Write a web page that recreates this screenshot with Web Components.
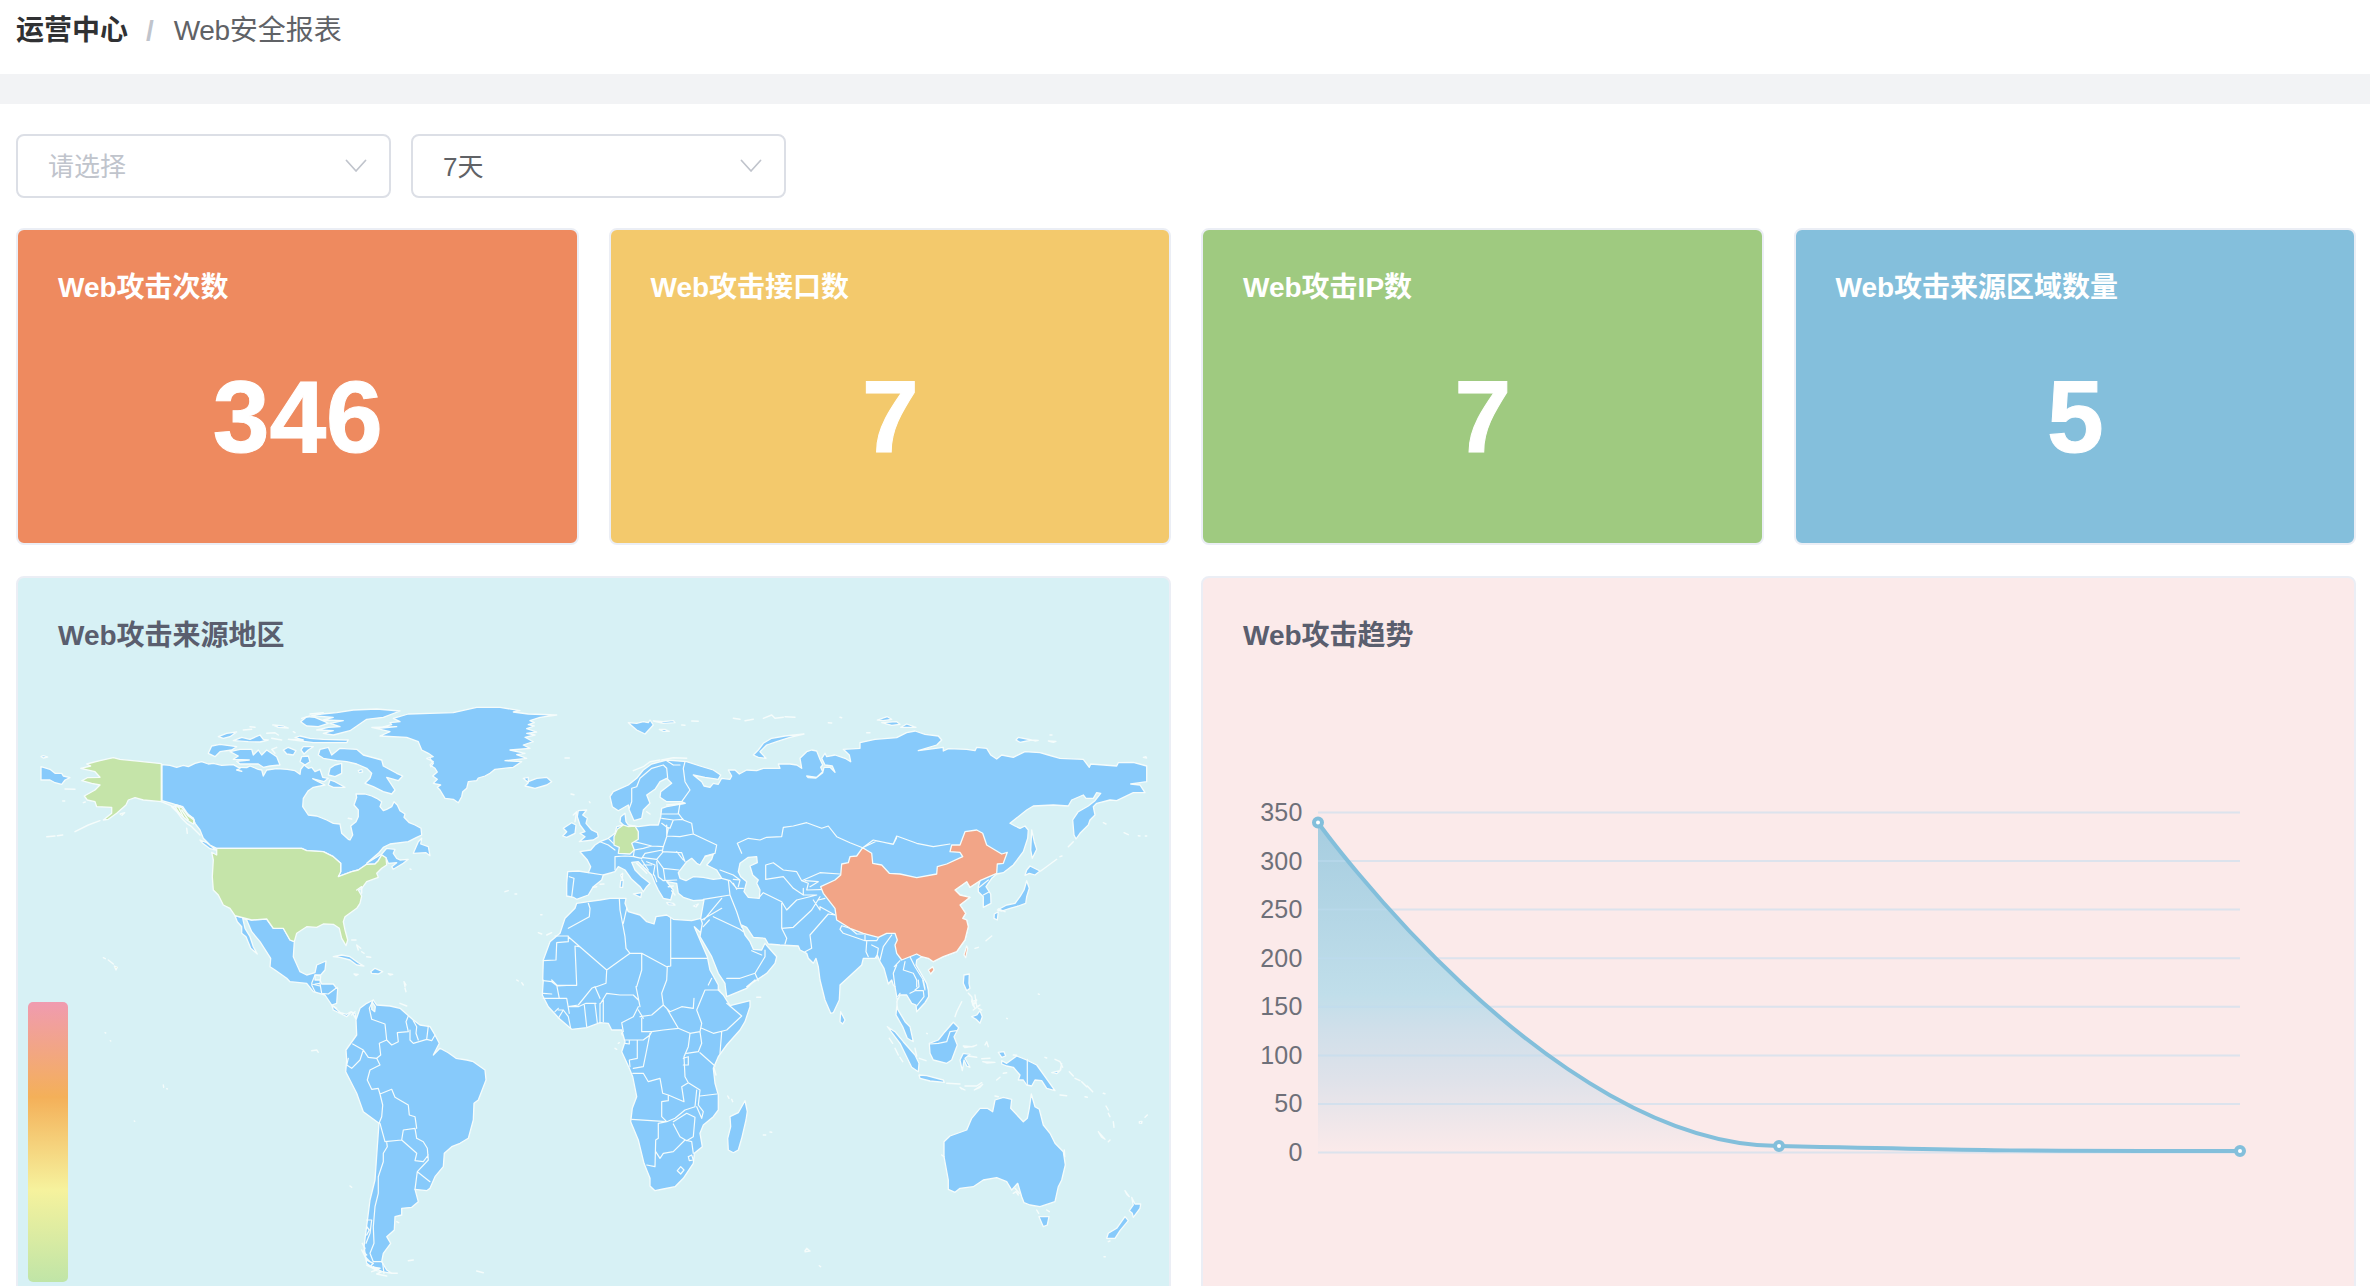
<!DOCTYPE html>
<html lang="zh-CN">
<head>
<meta charset="utf-8">
<title>Web安全报表</title>
<style>
html,body{margin:0;height:1286px;overflow:hidden;background:#fff}
body{font-family:"Liberation Sans","Noto Sans CJK SC",sans-serif;color:#303133}
</style>
</head>
<body>
<report-page></report-page>
<script>
const define=(name,html,after)=>customElements.define(name,class extends HTMLElement{
  constructor(){super();this.attachShadow({mode:'open'});}
  connectedCallback(){this.shadowRoot.innerHTML=html;if(after)after(this,this.shadowRoot);}
});

define('bread-crumb',`<style>
:host{display:flex;align-items:center;height:62px;padding:0 16px 12px;font-size:28px;line-height:40px;color:#606266}
b{color:#303133;font-weight:700}i{font-style:normal;color:#c0c4cc;margin:0 20px 0 18px;font-weight:700}
.w{letter-spacing:-.4px}
</style><b>运营中心</b><i>/</i><span><span class="w">Web</span>安全报表</span>`);

define('select-box',`<style>
:host{display:flex;box-sizing:border-box;width:375px;height:64px;border:2px solid #dcdfe6;border-radius:8px;align-items:center;justify-content:space-between;padding:0 21px 3px 30px;font-size:26px;color:#606266}
:host([empty]){color:#c0c4cc}svg{display:block}
</style><slot></slot><svg width="24" height="14" viewBox="0 0 24 14" fill="none" stroke="#c0c4cc" stroke-width="1.7" stroke-linecap="round" stroke-linejoin="round"><path d="M2.500 2.500 12 13 21.500 2.500"/></svg>`);

define('stat-card',`<style>
:host{display:block;box-sizing:border-box;flex:1;height:317px;border:2px solid #ebeef5;border-radius:8px;background:var(--tone);color:#fff;padding:38px 39px 0 40px;font-weight:700}
h3{margin:0;font-size:28px;line-height:40px;height:40px;font-weight:700}
p{margin:54px 0 0;text-align:center;font-size:102px;line-height:110px;-webkit-text-stroke:1px #fff}
</style><h3>Web<slot></slot></h3><p></p>`,(el,r)=>{r.querySelector('p').textContent=el.getAttribute('value')});

define('chart-panel',`<style>
:host{display:flex;flex-direction:column;box-sizing:border-box;width:1155px;height:760px;border:2px solid #ebeef5;border-radius:8px;background:var(--tone);overflow:hidden}
h3{box-sizing:border-box;flex:none;margin:0;padding:37px 39px 0 40px;height:68px;font-size:28px;line-height:42px;color:#5a5e6e;font-weight:700}
</style><h3>Web<slot name="title"></slot></h3><slot></slot>`);

/* Map sheets: every letter selects a sheet origin; coordinates are thirds of a pixel. */
const SHEETS={A:[0,690],B:[200,690],C:[500,690],D:[800,690],F:[200,980],G:[500,980],H:[800,980],K:[0,960]};
function trace(s,open){
  let o=SHEETS.A,out='',first=true;
  for(const t of s.trim().split(/\s+/)){
    if(SHEETS[t]){o=SHEETS[t];if(open)first=true;continue}
    if(t==='|'){first=true;continue}
    if(t==='z'){out+='Z';first=true;continue}
    const [x,y]=t.split(',').map(Number);
    out+=(first?'M':'L')+(o[0]+x/3).toFixed(1)+' '+(o[1]+y/3).toFixed(1);first=false;
  }
  return out;
}
const LAND=`
A 123,230 150,238 165,250 185,250 190,258 210,263 195,270 185,283 165,278 150,270 123,270 z
A 123,200 130,197 143,201 130,204 z
A 486,224 510,226 530,232 550,226 565,230 585,220 605,215 625,222 640,220 665,226 700,224 715,232 740,233 750,228 775,238 785,240
B 190,258 200,240 230,236 262,238 285,242 300,253 302,238 312,225 325,235 335,232 345,245 360,238 368,262 385,265 372,275 345,268 338,266 355,275 375,285 340,292 325,302 310,325 308,350 325,375 350,378 380,390 400,400 420,402 425,430 445,448 450,450 458,435 452,408 468,395 475,380 475,360 462,345 470,322 468,312 495,312 515,318 530,325 545,335 540,350 550,362 560,358 575,350 582,335 592,345 600,362 615,372 612,382 628,398 645,405 663,415 665,435 650,442 625,455 570,462 550,472 535,490 500,520 545,492 560,475 585,478 580,490 590,505 600,510 625,508 610,520 580,538 575,530 590,518 565,520 558,503 545,495 535,512 525,522 500,523 475,540 455,545 415,560 422,545 422,520 400,500 370,485 320,482 305,475 50,475 30,465 10,445 0,420 -15,400 -20,385 -45,365 -60,348 -85,340 -114,332 z
B 0,450 20,458 48,480 30,476 8,460 z
B 640,490 655,455 665,445 662,462 685,470 690,497 678,488 z
B 105,677 155,690 200,687 220,715 250,715 270,750 283,755 280,800 300,845 320,855 345,848 350,825 378,813 375,840 362,855 345,855 345,870 360,870 365,882 400,882 410,895
F 413,25 410,70 395,75 420,97 440,103 452,95 465,100 468,118 455,95 440,110 400,90 395,75 375,45 340,35 320,10 270,5
B 260,865 225,840 210,830 212,805 180,755 155,725 140,690 128,685 135,715 150,740 160,770 172,792 152,775 138,740 125,730 125,710 112,695 z
B 400,800 425,795 450,800 475,818 492,828 470,825 450,810 420,802 z
B 512,845 525,835 548,845 535,852 515,850 z B 462,852 475,853 468,857 z B 565,851 578,853 570,855 z
B 25,190 35,168 60,163 110,170 95,180 60,185 45,200 z
B 90,185 120,178 155,178 160,195 175,180 185,195 200,180 230,200 240,225 210,228 190,232 175,222 120,222 110,214 148,210 100,208 115,198 z
B 55,140 80,130 110,126 90,140 70,145 z B 100,152 125,142 150,148 180,135 190,148 205,150 180,156 145,155 z
B 218,105 250,108 265,114 235,112 z B 250,180 265,172 288,182 280,195 260,192 z B 303,180 310,170 340,170 325,180 312,192 z
B 300,215 305,200 325,198 330,215 315,225 z B 265,148 310,150 285,143 300,138 330,145 370,148 445,150 440,158 340,158 z
B 302,95 320,80 345,82 375,95 385,100 355,110 320,108 z
B 365,72 410,68 460,60 530,57 600,63 550,82 500,88 475,105 450,122 400,135 370,130 400,122 350,120 385,112 420,110 390,100 430,92 370,90 400,82 335,77 z
B 355,195 360,178 385,172 395,195 420,175 470,178 490,195 545,210 550,228 590,250 608,258 595,272 560,262 575,285 585,300 575,312 550,305 520,290 495,280 510,265 515,250 500,235 470,222 440,215 410,212 370,205 z
B 390,235 405,225 425,220 425,250 405,260 385,255 z B 390,270 405,275 435,292 400,292 385,285 z B 475,242 485,238 488,246 478,248 z
B 515,112 590,110 530,116 575,104 570,98 600,95 580,85 625,72 690,70 760,68 830,52 900,52 960,62 940,66 985,72 1070,75 1020,82 990,92 1003,98 985,104 1003,108 980,116 1010,126 980,130 1005,135 975,142 1000,155 970,165 990,175 930,180 975,190 950,194 980,205 915,212 965,215 940,232 885,238 870,250 855,258 835,264 830,272 805,275 800,295 788,305 785,320 775,338 760,328 735,325 720,300 712,292 722,285 700,280 712,268 698,258 712,246 705,235 690,225 700,215 680,205 700,200 685,190 665,180 655,155 620,142 540,138 570,125 z
B 970,265 985,262 985,275 1010,265 1040,262 1055,275 1040,285 1005,295 975,288 985,278 z
C 235,362 260,360 248,375 262,385 258,400 275,420 292,428 295,440 280,450 238,455 255,440 240,430 255,425 240,405 232,380 z
C 190,415 215,398 228,405 225,430 200,442 188,438 200,425 z
C 385,98 410,100 430,95 445,98 450,90 460,105 435,132 410,120 z C 460,93 490,95 520,92 525,98 490,100 z C 478,118 495,118 508,124 490,124 z
C 400,612 425,608 422,622 z C 362,572 370,570 368,592 360,592 z C 362,555 368,550 367,567 z C 500,638 520,640 525,645 505,644 z C 580,648 595,642 588,651 z
C 760,195 775,180 790,160 815,145 855,138 912,132 870,142 830,155 800,165 780,185 798,205 775,202 z
D 232,90 262,80 275,88 250,92 z D 245,98 290,95 300,103 275,106 z D 302,112 320,102 348,112 z D 648,150 655,142 695,150 660,157 z D 695,150 715,151 705,153 z D 745,153 768,154 760,157 z D 1030,202 1038,200 1040,204 z
C 560,215 600,228 640,240 662,255 655,268 615,262 580,255 605,275 612,288 630,292 640,280 655,283 665,265 690,268 695,258 685,240 705,240 718,252 740,240 770,242 790,235 840,235 835,222 870,222 890,225 905,235 900,205 920,185 935,180 950,183 960,208 968,225 962,232 968,245 950,262 920,258 925,263 948,264 968,248 972,232 990,232 1005,247 997,228 975,225 965,205 975,190 980,200 1005,195 1035,205 1052,215 1048,195 1030,178 1080,175 1080,158 1125,148 1190,143
D 290,143 320,128 345,123 375,133 415,138 425,150 410,165 355,182 430,172 430,183 445,176 500,178 525,182 530,172 560,175 572,195 590,207 605,195 640,202 675,185 720,188 745,195 780,205 850,208 868,232 872,222 950,228 955,218 1000,217 1040,228 1040,275 1020,278 992,282 1020,285 1035,308 1000,308 950,332 930,330 890,340 880,350 885,375 870,390 865,405 840,430 828,447 822,435 818,390 835,365 865,348 885,332 902,310 890,308 880,325 858,325 850,315 815,330 805,348 760,345 700,348 680,360 630,400 645,408 660,415 675,408 685,420 683,445 670,485 640,525 610,548 590,552 575,565 558,590 572,612 573,640 550,652 550,620 535,605 535,590 540,572 510,592 500,575 465,600 480,615 510,622 480,645 497,670 488,685 500,690 505,710 495,750 470,785 430,800 400,815 385,805 365,800 350,810 348,825 360,845 380,880
H 385,30 386,50 375,68 350,95 348,75 335,70 320,45 300,45 290,65 293,88 315,125 330,140 340,185 322,175 308,140 288,105 292,60 285,20
D 280,885 275,870 265,882 252,835 240,815 232,795 225,805 205,805 190,805 185,825 120,885
H 120,20 118,60 100,98 92,100 75,60 60,0
D 55,830 48,805 40,820 25,805 20,790 0,780
C 895,768 840,765 805,762 795,745 760,742 740,712 725,705 735,735 750,755 760,778 785,780 795,760 805,772 830,800 825,820 800,850 770,870 740,890
G 765,0 740,25 680,50 676,20
C 675,880 655,850 635,800 600,740 607,700 602,685 612,630 580,632 550,622 535,610 530,580 500,575 520,600 512,630 490,625 475,600 465,580 455,555 430,530 415,515 395,517 405,540 425,560 450,580 440,590 430,605 420,590 395,568 375,540 355,530 345,545 310,555 305,570 280,590 265,615 230,628 220,622 200,618 200,580 203,545 235,543 265,548 272,530 262,510 240,485 272,480 285,465 300,455 325,445 345,430 350,410 370,405 360,395 362,380 375,370 378,395 385,405 415,410 450,405 475,405 482,380 485,355 500,350 555,340 545,335 500,335 480,322 482,305 515,280 500,265 480,275 465,298 440,315 450,340 430,360 425,385 402,392 388,360 385,345 355,362 337,350 330,320 340,305 385,285 410,265 430,240 455,222 500,210 z
C 230,640 265,635 300,630 330,625 378,625 375,640 385,665 420,675 440,695 462,702 468,680 500,675 520,688 575,692 602,685 607,700 602,728 583,710 600,750 622,800 630,840 655,885
G 655,30 670,45 690,77 750,62 750,80 735,125 720,150 680,195 655,230 640,265 645,310 655,345 655,390 640,410 610,435 600,460 607,500 583,520 580,550 550,595 525,620 490,627 465,632 450,618 450,595 432,550 415,480 392,425 397,385 410,350 398,290 388,265 365,215 375,185 365,150 335,150 325,130 300,128 260,143 215,148 180,118 145,80 127,45 130,0
C 128,870 130,810 150,755 180,730 195,685 225,655 z
G 690,410 715,398 735,362 742,395 738,420 725,475 715,510 700,518 685,510 683,475 692,440 z
C 1022,965 1035,990 1028,1002 1020,995 z H 262,140 285,155 310,185 345,225 357,250 355,275 335,262 300,190 z
H 357,285 380,287 430,300 433,307 390,303 360,295 z
H 388,190 415,180 435,155 460,127 476,143 462,170 472,195 455,240 440,250 400,240 390,220 z
H 480,240 490,220 510,223 495,235 510,262 500,258 492,240 487,272 z H 490,198 515,200 530,195 520,200 495,203 z
H 595,217 612,215 617,228 605,232 z H 605,242 620,250 650,228 680,240 710,255 735,290 765,332 740,325 725,302 705,300 695,318 680,315 670,300 655,300 660,285 640,262 620,258 605,252 z
H 755,278 780,272 785,250 782,270 770,281 z H 480,322 495,330 485,327 z H 523,330 548,313 540,322 z H 548,245 585,247 560,249 z
H 530,105 540,92 547,110 540,130 528,118 515,110 z D 492,855 508,852 507,880 510,895 500,902 490,880 z H 515,60 525,85 518,75 z
H 694,342 705,380 718,388 730,435 750,460 765,490 790,515 796,555 785,600 775,620 765,665 720,680 690,675 672,668 665,650 653,610 635,630 620,605 590,593 550,600 520,620 480,625 465,637 445,628 445,600 432,530 432,485 450,468 500,450 515,415 540,385 562,385 578,395 585,360 610,352 635,358 632,385 670,425 682,415 688,385 z
H 717,710 747,710 742,735 730,740 z
H 995,652 1005,672 1022,672 1020,685 1000,712 997,700 988,692 1000,675 z H 975,710 985,722 960,752 945,775 920,775 925,760 950,745 z
H 895,455 915,478 905,472 z H 1018,425 1026,424 1025,430 1018,429 z H 975,632 988,650 980,643 z
D 695,420 703,455 710,478 697,505 692,480 z D 690,528 720,543 705,555 688,550 675,556 680,540 z
D 680,572 688,595 680,620 677,640 655,648 630,655 605,663 592,660 620,645 645,640 660,620 672,600 z D 583,672 595,665 592,690 582,685 z
F 700,225 720,205 745,218 768,235 800,240 820,245 855,270 858,300 835,360 822,370 820,420 805,475 780,490 755,500 733,520 730,560 705,590 690,625 680,632 645,628 655,665 635,682 605,685 605,705 585,710 583,750 560,770 572,790 550,820 545,845 560,870 575,880 530,872 500,850 492,800 505,700 510,660 525,600 532,500 537,430 490,395 470,340 437,275 440,240 438,210 470,165 468,120 480,85 500,70 520,60 530,75 570,78 600,85 640,120 660,135 690,140 705,165 718,190 z`;
const USA=`A 242,235 272,228 260,222 300,212 340,203 360,208 420,214 484,221 484,335 430,330 405,323 385,330 378,345 350,370 325,388 310,390 335,370 335,352 290,350 285,335 262,330 253,318 285,300 300,285 275,280 245,272 262,263 300,262 285,245 z
B 50,475 305,475 320,482 370,485 400,500 422,520 422,545 415,560 455,545 475,540 500,523 525,522 535,512 545,495 558,503 560,525 545,535 530,550 535,562 500,575 485,595 475,600 485,618 480,640 470,655 435,680 430,695 435,720 443,750 438,767 425,745 418,715 400,703 370,702 350,712 320,710 290,730 283,755 270,750 250,715 220,715 200,687 155,690 105,677 90,655 70,645 55,615 40,600 37,560 40,510 35,487 50,495 z
A 343,828 352,832 348,840 z A 360,372 374,368 366,376 z A 525,350 545,352 565,378 582,390 580,402 560,390 540,372 z`;
const CHINA=`D 188,473 215,490 218,520 245,525 268,550 300,552 350,563 410,552 412,530 440,522 488,500 480,487 450,485 455,465 480,465 495,425 530,420 548,430 560,465 585,480 605,492 622,487 610,520 592,522 590,550 540,572 510,592 500,575 465,600 480,615 510,622 480,645 497,670 488,685 500,690 505,710 495,750 470,785 430,800 400,815 385,805 365,800 350,792 305,810 290,790 285,765 292,750 285,730 260,730 235,742 190,730 150,715 110,690 105,655 70,610 62,590 105,570 122,555 125,522 145,518 150,500 170,498 z
D 385,840 398,830 402,840 392,852 z D 492,795 500,768 503,775 497,803 z`;
const GERMANY=`C 352,418 370,405 385,410 405,408 415,425 415,448 395,460 403,480 390,492 355,490 358,472 342,465 342,440 z`;
const WATER=`C 540,565 535,548 560,515 575,505 590,520 600,525 615,500 640,493 635,508 620,525 650,540 665,565 640,568 610,562 580,560 558,572 z
C 720,520 745,502 770,500 772,518 750,528 758,555 775,570 770,580 780,600 778,625 745,622 732,605 740,575 722,560 715,545 z F 516,65 526,80 524,95 515,88 z`;
const BORDERS=`B 345,855 335,880 | 345,855 362,858 360,880 345,882 | F 335,15 345,35 | 360,10 365,40 385,42 412,22 | 335,12 360,18
F 395,75 410,85 | 465,95 455,105
F 520,60 508,85 515,118 555,132 560,180 575,195 595,185 592,158 625,155 618,125 625,108 | 630,150 630,180 640,190 680,178 695,182 705,165 | 640,122 650,140 648,160 655,180 | 685,138 680,178
F 560,180 538,190 542,225 530,235 505,232 490,210 458,192 | 490,210 480,240 455,265 440,255 445,235 | 530,235 540,255 510,270 502,300 515,328 535,325 540,342 575,328 585,352 625,375 628,405 645,410 650,445 | 650,475 670,485 682,505 685,540 652,575 690,605 | 540,342 548,375 545,410 537,430 | 540,430 555,485 605,480 610,450 645,445 650,475 | 605,480 650,520 645,542 670,545 685,525 | 652,575 645,628 | 560,487 562,500 550,520 550,545 535,590 535,640 525,680 520,740 522,790 510,820 520,845 545,845 | 548,850 552,880 | 500,720 515,720 510,760 498,790
C 555,215 550,235 555,275 570,300 545,335 | 540,225 520,225 | 500,235 490,225 455,235 420,265 410,290 395,295 395,335 388,355 | 500,235 503,265 | 520,225 500,212
C 540,340 535,370 550,390 575,400 580,432 540,440 500,438 | 482,372 535,372 | 485,385 520,390 550,388 | 500,438 505,415 485,400 | 520,390 510,415 498,410 | 500,405 500,440 490,470 455,468 403,455 | 580,432 650,465 645,490 615,498 | 490,470 487,485 545,488 555,515 | 530,485 550,510
C 403,480 430,475 455,468 | 435,490 487,480 | 403,480 400,500 425,505 435,490 | 345,500 375,498 405,500 | 345,500 345,540 | 345,480 325,465 300,455 | 325,445 340,460 | 430,503 470,508 490,485 | 470,508 490,535 537,540 | 440,515 465,525 460,555 | 425,510 445,540 | 470,515 475,560 490,572 530,570 | 490,535 495,570 | 463,555 470,575 | 430,525 455,525 | 265,548 310,555 | 208,560 222,565 215,620
C 660,540 700,555 720,570 700,568 | 665,565 690,572 710,595 730,595 | 685,570 690,615 610,628 | 700,580 710,598 | 720,570 715,590
C 725,490 712,460 745,445 780,450 800,442 845,440 850,412 880,408 920,398 965,415 985,408 1010,440 1050,458 1088,473 1120,450 1180,463 1190,443
D 188,473 230,453 280,462 290,438 350,460 400,470 450,462
C 797,568 797,525 820,518 850,540 890,545 905,572 925,580 | 797,568 850,560 880,595 910,615 | 905,572 960,548 1020,552 | 925,580 920,600 980,598 | 915,572 955,575 930,590 | 775,625 790,608 845,635 860,660 890,630 950,615 910,615 | 845,640 845,715 860,745 855,762 | 845,715 880,712 935,660 960,620 | 910,615 910,595 | 940,630 960,660 960,650 1005,675 | 955,630 975,625 | 1005,675 985,672 930,735 935,775 915,785
C 690,615 700,640 710,665 725,712 | 612,690 640,655 665,625 | 665,655 605,690 | 640,680 720,718 730,725 | 610,710 628,690 | 680,865 720,865 765,850 795,800 795,780 | 765,850 775,872 | 755,782 785,795
C 265,640 270,655 268,680 205,715 | 130,812 168,810 170,758 205,755 205,738 165,738 | 205,740 320,840 390,790 425,790 500,830 | 358,625 360,660 375,740 378,775 390,790 | 380,655 370,700 | 512,685 512,828 | 512,805 620,805 | 238,770 225,768 230,885 172,888 155,875 130,872 | 320,840 318,880 285,892 | 425,790 425,840 410,890 | 512,828 502,830 500,870
G 285,20 275,25 235,75 205,80 | 170,15 155,0 | 170,15 230,16 | 130,40 155,42 | 170,15 178,55 | 130,55 160,55 200,55 208,100 | 175,90 190,90 175,115 | 190,90 205,110 212,145 | 165,95 175,85 | 205,80 235,80 258,70 288,70 | 285,20 300,55 | 302,70 320,40 360,45 400,45 415,60 | 253,75 260,140 | 285,72 292,128 | 300,70 300,128 | 310,60 310,125 | 408,20 420,80 | 415,80 400,110 365,128 370,155 | 415,90 430,115 | 420,110 455,105 490,75 485,40 500,0 | 425,115 425,155 455,155 450,165 430,180 375,180 | 490,75 510,95 545,80 580,85 582,55 | 500,85 535,145 490,150 455,155 | 535,145 570,160 600,155 605,130 590,90 615,30 660,30 | 605,145 640,160 680,150 725,108 680,70 | 665,155 660,220 | 600,155 605,190 595,215 560,220 | 600,218 645,258 | 570,160 565,200 552,230 555,290 565,308 600,330 | 550,235 565,230 565,255 550,255 | 450,160 440,210 430,260 400,265 | 375,190 388,192 388,182 | 412,180 412,235 388,240 390,260 | 398,280 430,280 445,305 480,295 488,340 505,345 552,365 545,320 565,308 | 505,345 505,362 485,365 485,410 500,425 | 500,425 395,418 | 600,348 650,342 | 600,330 595,375 610,395 605,415 590,380 | 500,425 525,415 555,390 585,380 590,330 | 520,425 560,400 585,412 580,470 560,482 540,470 520,432 | 475,430 500,425 | 475,430 475,475 467,480 465,560 440,555 | 467,515 480,535 490,520 520,515 555,480 575,485 580,520 | 565,530 575,525 580,540 568,542 565,530 | 532,572 542,560 552,570 542,582 532,572
C 625,885 635,865
D 190,732 170,732 150,715 125,707 120,718 130,730 165,742 195,752 | 195,735 195,752 230,752 240,735 | 200,755 198,785 205,800 | 215,765 235,775 230,805 | 275,735 250,770 240,810 | 283,830 300,812 | 315,815 310,840 340,850 350,870 350,890 | 330,800 345,830 370,870 375,895 | 290,825 280,850 285,890
H 330,40 345,32 370,32 372,50 350,78 | 355,0 357,20 345,30 | 368,0 375,30 | 300,40 293,50 | 390,192 415,190 440,185 450,155 470,152 | 682,238 682,315 D 538,592 565,570 | 550,615 568,605`;
const SPECKS=`A 225,425 265,405 300,392 | 140,440 165,438 | 172,437 188,435 | 195,297 225,298 | 188,333 194,333 | 310,803 316,806 | 325,810 340,822 | 250,338 256,336 | 484,335 520,350 530,345 548,350 565,375 580,385 584,400 | 515,350 530,365 545,385 560,400 575,410 | 520,352 540,372 | 545,360 565,390 | 535,350 550,380 | 560,415 562,430 | 1070,600 1085,590 1085,610 | 575,410 600,435
B 455,750 468,750 | 470,765 482,775 | 485,785 492,790 | 500,800 512,802 | 470,765 475,780 | 915,605 925,602 | 945,612 950,612 | 1022,674 1026,674 | 1015,728 1025,732 | 1040,735 1055,728 | 1095,204 1108,204 | 1113,312 1122,314 | 1168,335 1170,338 | 630,537 633,538 | 612,875 615,890 | 950,870 955,873 | 965,878 970,885 | 690,205 700,220 692,230 | 1120,375 1130,365 1125,395 | 445,385 455,387 | 305,85 330,78 | 280,125 285,128 | 150,110 165,112 | 200,130 225,128 235,135 | 215,145 245,150 | 230,172 215,178 225,190 | 130,120 155,118 | 330,72 370,68 | 120,236 110,240 125,244
C 700,85 720,88 | 735,92 760,88 | 790,85 815,75 825,85 850,82 | 855,80 885,82 | 545,105 555,106 | 575,93 595,94 | 985,98 995,99 | 1100,128 1110,128 | 280,592 290,590 | 300,583 312,582 | 505,590 520,588 | 515,602 525,615 | 410,520 425,535 440,550 | 555,340 500,345 | 485,210 520,203 560,205 | 440,365 450,372 | 400,242 430,230 450,215 480,210
D 805,470 820,455 | 722,543 770,508 | 780,500 786,498 | 910,398 918,402 | 972,428 985,434 | 1015,437 1020,438 | 1036,438 1040,438 | 558,752 575,738 | 525,775 535,772 | 750,135 756,135 | 120,82 125,83 | 595,657 615,665
F 612,5 618,15 | 615,25 618,35 | 335,212 350,210 355,217 | 625,842 640,840 | 830,873 850,878 | 590,725 596,728 | 487,790 495,805 490,815 500,825 | 495,830 510,845 | 500,855 530,870 515,875 | 520,860 545,875 530,882 560,888 | 500,740 508,750 500,765 | 485,810 500,840 520,850 510,860 540,865 | 575,880 592,880 | 600,70 620,78 | 450,618 455,622
G 345,205 350,208 | 355,190 358,188 | 365,160 367,165 | 683,348 687,355 | 695,358 698,365 | 790,465 797,465 | 810,456 815,457 | 770,52 782,52 | 915,812 920,805 930,813 915,815 | 958,857 962,860 | 642,265 648,285
H 268,175 278,190 | 285,205 295,225 | 300,232 308,245 | 345,205 350,228 | 358,235 378,242 | 440,310 480,312 | 495,318 530,318 545,308 | 465,110 470,95 485,65 | 505,40 515,50 520,75 530,60 515,65 | 525,45 530,80 540,75 520,90 | 535,85 545,90 | 555,195 560,185 565,200 | 505,228 530,232 | 545,236 570,235 | 590,300 600,292 | 610,280 620,278 | 640,225 650,226 | 735,232 740,234 | 765,238 780,245 788,262 | 808,275 820,288 | 825,295 840,302 | 845,305 860,320 | 862,318 878,335 | 780,345 800,347 | 855,350 862,352 | 910,340 915,341 | 918,378 925,390 | 925,400 930,410 | 940,425 942,442 | 925,485 930,480 | 1035,412 1042,405 | 715,42 718,43 | 620,115 622,116 | 380,160 382,161 | 640,640 648,635 655,645 | 645,625 658,640 | 710,690 716,700 | 740,690 748,695 | 912,830 916,830 | 925,785 930,783 | 425,525 432,530 | 585,348 595,350 | 793,510 794,530
K 315,218 317,219 | 331,242 332,243 | 490,375 491,382 | 500,386 502,387 | 403,483 404,484`;

define('world-map',`<style>
:host{display:flex;height:690px;padding:0 0 0 10px;align-items:flex-start}
.scale{flex:none;width:40px;height:280px;margin-top:356px;border-radius:5px;background:linear-gradient(#f09bb0,#f4b059 34%,#f6f29d 67%,#c0e5a7)}
svg{flex:none;display:block;margin-left:-50px;width:1151px;height:640px}
path{stroke-linejoin:round;stroke-linecap:round}
</style><div class="scale"></div><svg viewBox="18 646 1151 640"></svg>`,(el,r)=>{
  const p=(d,fill,w=1.3)=>`<path d="${trace(d,fill==='none')}" fill="${fill}" stroke="#f5fcfb" stroke-width="${w}"/>`;
  r.querySelector('svg').innerHTML=p(LAND,'#87cafb')+p(BORDERS,'none',1.2)+p(USA,'#c5e4a9')+p(GERMANY,'#c5e4a9')+p(CHINA,'#f2a587')+p(WATER,'#d7f1f5')+p(SPECKS,'none',1.4);
});

define('trend-chart',`<style>
:host{display:block}svg{display:block;width:1151px;height:640px}
text{font-size:25px;fill:#6e7079;text-anchor:end;letter-spacing:.2px}
</style><svg viewBox="1203 646 1151 640"><defs><linearGradient id="g" x1="0" y1="0" x2="0" y2="1"><stop offset="0" stop-color="#a6cde0"/><stop offset=".52" stop-color="#c0deea"/><stop offset=".62" stop-color="#cfdfea"/><stop offset=".78" stop-color="#dfe2ea"/><stop offset="1" stop-color="#fbeaea"/></linearGradient></defs></svg>`,(el,r)=>{
  let s='<path d="M1318 822.500C1318 822.500 1550 1146 1779 1146C2009 1151 2010 1151 2240 1151V1152.500H1318Z" fill="url(#g)"/>';
  for(let i=0;i<8;i++){const y=812.5+i*48.571;s+=`<path d="M1318 ${y.toFixed(1)}H2240" stroke="#bddcf0" stroke-opacity=".5" stroke-width="2"/><text x="1302.500" y="${(y+8.500).toFixed(1)}">${350-i*50}</text>`}
  s+='<path d="M1318 822.500C1318 822.500 1550 1146 1779 1146C2009 1151 2010 1151 2240 1151" fill="none" stroke="#83bfdb" stroke-width="4"/>';
  for(const [x,y] of [[1318,822.5],[1779,1146],[2240,1151]])s+=`<circle cx="${x}" cy="${y}" r="4" fill="#fff" stroke="#83bfdb" stroke-width="4"/>`;
  r.querySelector('svg').insertAdjacentHTML('beforeend',s);
});

define('report-page',`<style>
:host{display:block}.band{height:30px;background:#f2f3f5}
main{display:flex;flex-direction:column;padding:30px 14px 0 16px}
.row{display:flex;gap:20px;height:94px}.cards,.panels{display:flex;gap:30px}.cards{padding-bottom:31px}
</style><bread-crumb></bread-crumb><div class="band"></div><main>
<div class="row"><select-box empty>请选择</select-box><select-box>7天</select-box></div>
<div class="cards"><stat-card value="346" style="--tone:#ee8a5f">攻击次数</stat-card><stat-card value="7" style="--tone:#f3c96c">攻击接口数</stat-card><stat-card value="7" style="--tone:#9fca80">攻击IP数</stat-card><stat-card value="5" style="--tone:#84bfdc">攻击来源区域数量</stat-card></div>
<div class="panels"><chart-panel style="--tone:#d7f1f5"><span slot="title">攻击来源地区</span><world-map></world-map></chart-panel><chart-panel style="--tone:#fbeaea"><span slot="title">攻击趋势</span><trend-chart></trend-chart></chart-panel></div>
</main>`);
</script>
</body>
</html>
